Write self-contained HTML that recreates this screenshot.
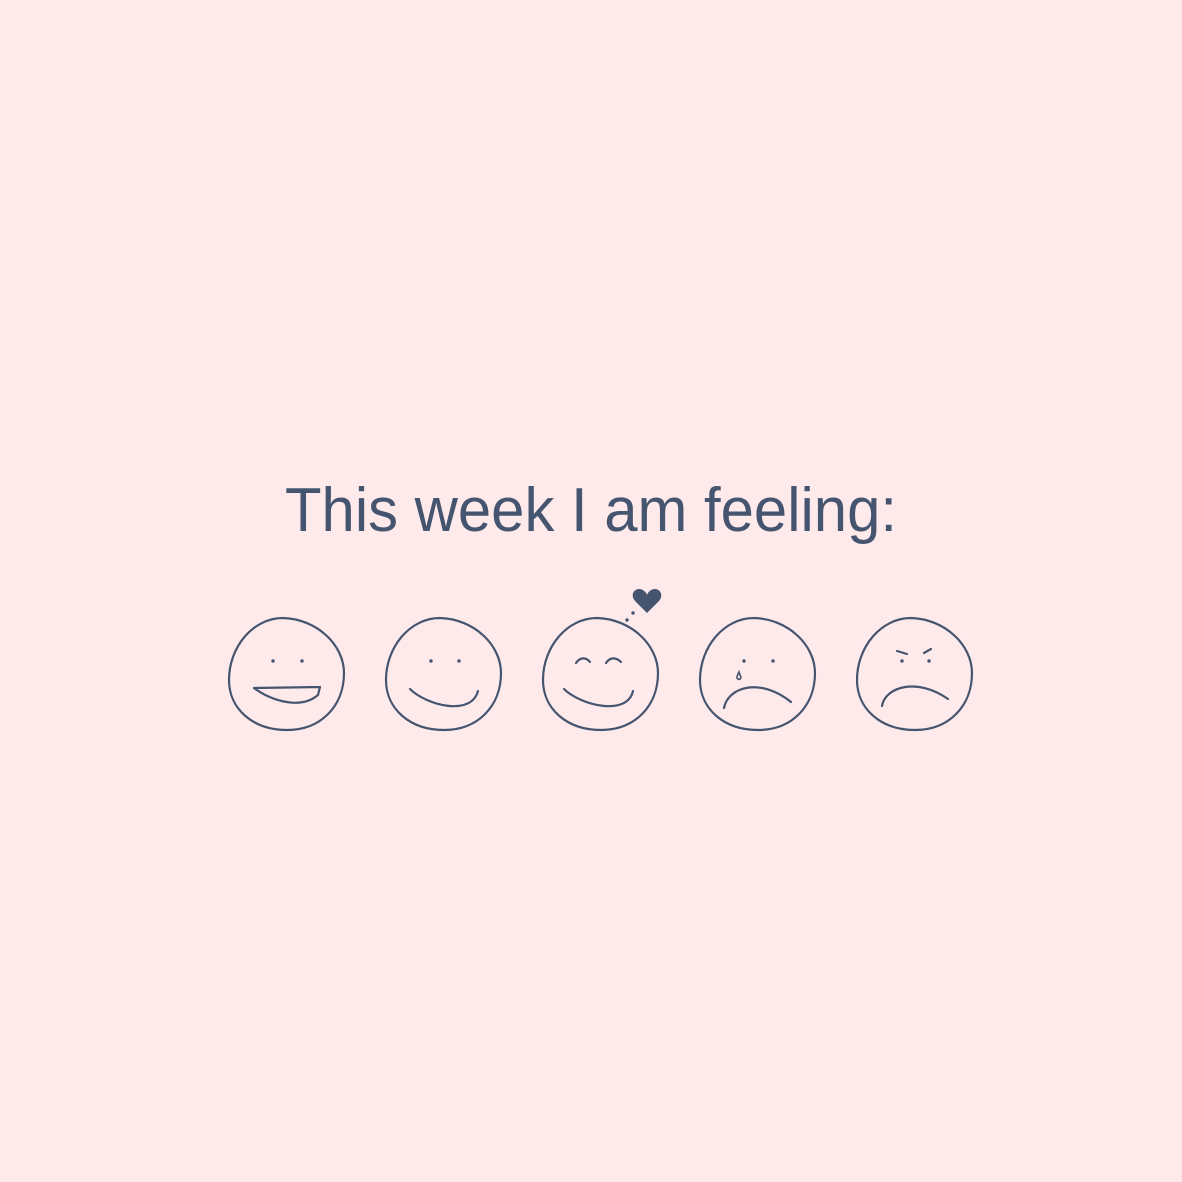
<!DOCTYPE html>
<html><head><meta charset="utf-8"><style>
html,body{margin:0;padding:0;background:#feeaeb;}
svg{display:block}
</style></head><body>
<svg width="1182" height="1182" viewBox="0 0 1182 1182" xmlns="http://www.w3.org/2000/svg">
<rect width="1182" height="1182" fill="#feeaeb"/>
<text x="285" y="531" font-family="Liberation Sans, sans-serif" font-size="62" fill="#45556f" textLength="612" lengthAdjust="spacingAndGlyphs">This week I am feeling:</text>
<defs>
<path id="o" d="M54,1 C88,2 115,28 115,56 C115,89 92,113 58,113 C24,113 0,92 0,63 C0,30 24,1 54,1 Z"/>
</defs>
<g fill="none" stroke="#45556f" stroke-width="2.2" stroke-linecap="round">
<g transform="translate(229,617)">
<use href="#o"/>
<path d="M25,71 L91,70 M25,71 C40,82 70,94 89,78 L91,70"/>
<circle cx="44" cy="44" r="1.7" fill="#45556f" stroke="none"/><circle cx="73" cy="44" r="1.7" fill="#45556f" stroke="none"/>
</g>
<g transform="translate(386,617)">
<use href="#o"/>
<path d="M24,72 C40,88 85,100 92,74"/>
<circle cx="45" cy="44" r="1.7" fill="#45556f" stroke="none"/><circle cx="73" cy="44" r="1.7" fill="#45556f" stroke="none"/>
</g>
<g transform="translate(543,617)">
<use href="#o"/>
<path d="M21,72 C37,88 84,100 90,74"/>
<path d="M33,46 C37,40 43,40 47,45 M63,46 C67,40 73,40 78,45"/>
<circle cx="90" cy="-4" r="1.7" fill="#45556f" stroke="none"/><circle cx="84" cy="3" r="1.7" fill="#45556f" stroke="none"/>
<path d="M104,-4 L92,-16 C87,-22 91,-28 96,-28 C100,-28 103,-25 104,-22 C105,-25 108,-28 112,-28 C117,-28 121,-22 116,-16 Z" fill="#45556f" stroke="none"/>
</g>
<g transform="translate(700,617)">
<use href="#o"/>
<path d="M24,91 C28,70 60,60 91,85"/>
<path d="M39,55 C37,59 36,61 38,62 C40,63 42,61 40,58 Z" stroke-width="1.6"/>
<circle cx="44" cy="44" r="1.7" fill="#45556f" stroke="none"/><circle cx="73" cy="44" r="1.7" fill="#45556f" stroke="none"/>
</g>
<g transform="translate(857,617)">
<use href="#o"/>
<path d="M25,89 C28,70 60,60 91,82"/>
<path d="M40,34 L50,37 M67,36 L74,32"/>
<circle cx="45" cy="44" r="1.7" fill="#45556f" stroke="none"/><circle cx="72" cy="44" r="1.7" fill="#45556f" stroke="none"/>
</g>
</g>
</svg>
</body></html>
